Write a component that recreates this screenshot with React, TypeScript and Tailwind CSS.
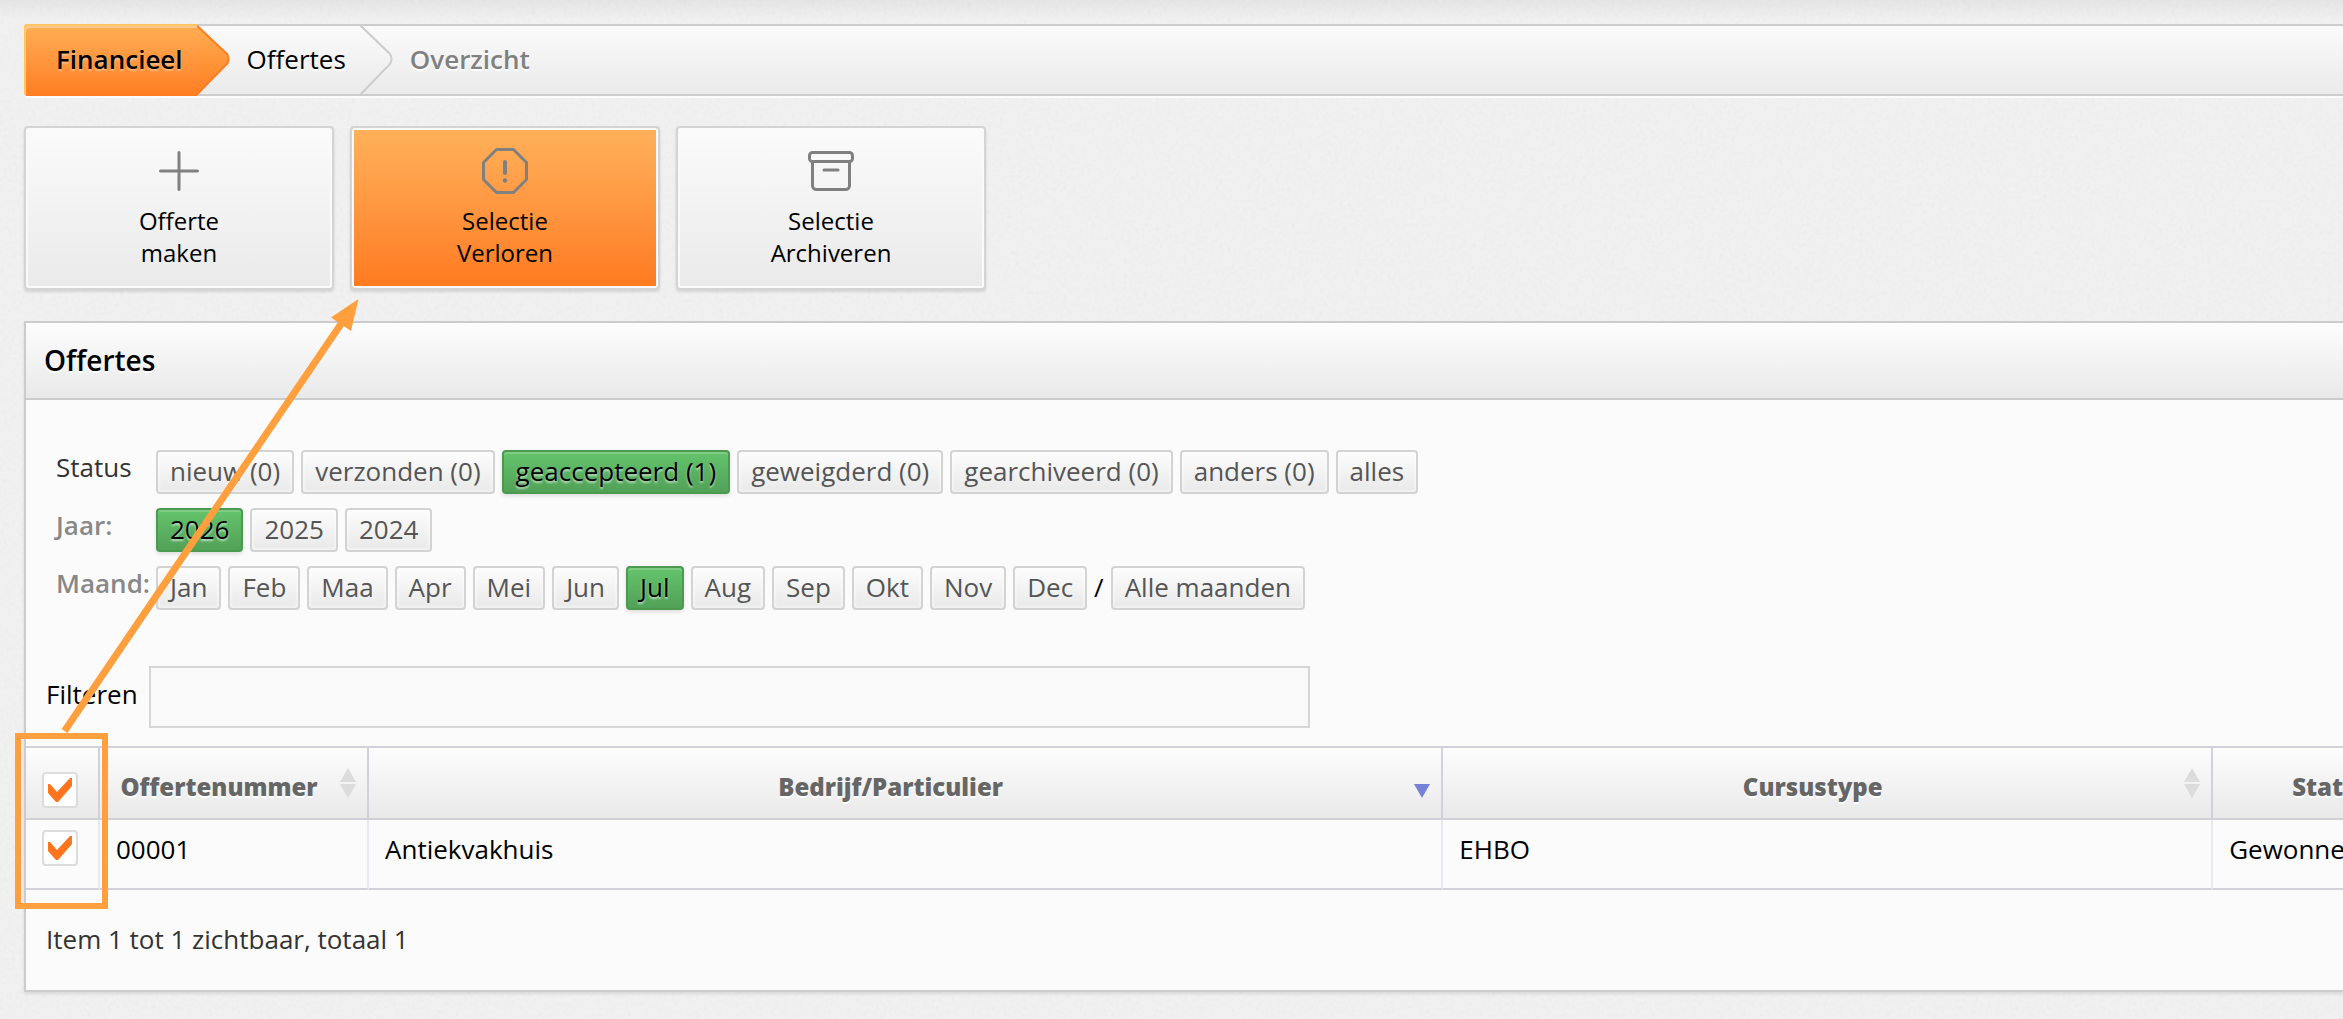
import { ReactNode, useState } from 'react';
import clsx from 'clsx';

const statuses = [
  'nieuw (0)',
  'verzonden (0)',
  'geaccepteerd (1)',
  'geweigderd (0)',
  'gearchiveerd (0)',
  'anders (0)',
  'alles',
];
const years = ['2026', '2025', '2024'];
const months = ['Jan', 'Feb', 'Maa', 'Apr', 'Mei', 'Jun', 'Jul', 'Aug', 'Sep', 'Okt', 'Nov', 'Dec'];

const PlusIcon = () => (
  <svg className="size-12" viewBox="0 0 48 48" fill="none" stroke="#808080" strokeWidth="3" strokeLinecap="round" aria-hidden="true">
    <path d="M24 5.5v37M5.5 24h37" />
  </svg>
);

const WarningIcon = () => (
  <svg className="size-12" viewBox="0 0 48 48" fill="none" stroke="#808080" strokeWidth="3" strokeLinejoin="round" aria-hidden="true">
    <path d="M15.5 2.5h17l13 13v17l-13 13h-17l-13-13v-17z" />
    <path d="M24 15v11" strokeWidth="4" strokeLinecap="round" />
    <circle cx="24" cy="33.5" r="2.3" fill="#808080" stroke="none" />
  </svg>
);

const ArchiveIcon = () => (
  <svg className="size-12" viewBox="0 0 48 48" fill="none" stroke="#808080" strokeWidth="3" strokeLinecap="round" strokeLinejoin="round" aria-hidden="true">
    <rect x="2.5" y="5.5" width="43" height="9" rx="3" />
    <path d="M5.500 14.500v24a4 4 0 0 0 4 4h29a4 4 0 0 0 4-4v-24M17 23h14" />
  </svg>
);

const SortIcon = ({ active = false }: { active?: boolean }) => (
  <svg className="h-[30px] w-4 shrink-0" viewBox="0 0 16 30" aria-hidden="true">
    {!active && <path d="M8 0l8 14H0z" fill="#dcdcdc" />}
    <path d="M0 16h16L8 30z" fill={active ? '#7580d8' : '#dcdcdc'} />
  </svg>
);

const Breadcrumb = () => (
  <nav
    aria-label="Kruimelpad"
    className="flex h-18 items-center rounded-sm bg-linear-to-b from-[#fbfbfb] to-[#eaeaea] text-[26px] leading-9 shadow-[inset_0_0_0_2px_#cccccc,0_2px_0_#fbfbfb]">
    <a
      href="/"
      className="flex h-full items-center rounded-l-sm bg-linear-to-b from-[#ffaf55] to-[#ff7d20] pr-[14px] pb-0.5 pl-8 font-semibold text-black shadow-[inset_1px_2px_0_#ffc562,inset_2px_4px_0_#ffc98d] text-shadow-[0_2px_2px_rgba(255,255,255,0.4)]">
      Financieel
    </a>
    <svg className="h-full w-[34px]" viewBox="0 0 34 72" aria-hidden="true">
      <defs>
        <linearGradient id="crumb" x1="0" y1="0" x2="0" y2="1">
          <stop offset="0" stopColor="#ffaf55" />
          <stop offset="1" stopColor="#ff7d20" />
        </linearGradient>
      </defs>
      <path d="M0 0L30 30q3 5 0 10L0 72z" fill="url(#crumb)" />
      <path d="M0 2L30 30q3 5 0 10L0 70" fill="none" stroke="#ff7d20" strokeWidth="2" />
    </svg>
    <a href="/" className="pr-[14px] pb-0.5 pl-4 text-black text-shadow-[0_2px_0_#ffffff]">
      Offertes
    </a>
    <svg className="h-full w-[34px]" viewBox="0 0 34 72" fill="none" aria-hidden="true">
      <path d="M0 1L30 30q3 5 0 10L0 71" stroke="#cccccc" strokeWidth="2" />
    </svg>
    <span className="pb-0.5 pl-4 font-semibold text-[#808080] text-shadow-[0_2px_0_#ffffff]">Overzicht</span>
  </nav>
);

type ActionProps = { icon: ReactNode; top: string; bottom: string; active?: boolean };

const ActionButton = ({ icon, top, bottom, active = false }: ActionProps) => (
  <button
    type="button"
    className={clsx(
      'flex w-[310px] flex-col items-center rounded-sm border-2 border-[#d4d4d4] bg-linear-to-b pt-[19px] pb-[19px] text-2xl leading-8 text-black shadow-[inset_0_0_0_2px_#fafafa,0_2px_3px_rgba(0,0,0,0.12)]',
      active ? 'from-[#ffb15a] to-[#ff7a1e]' : 'from-[#fbfbfb] to-[#eaeaea]',
    )}>
    {icon}
    <span className="mt-[10px]">{top}</span>
    <span>{bottom}</span>
  </button>
);

type ChipProps = { label: string; active: boolean; onClick: () => void };

const Chip = ({ label, active, onClick }: ChipProps) => (
  <button
    type="button"
    aria-pressed={active}
    onClick={onClick}
    className={clsx(
      'h-11 rounded-sm border-2 bg-linear-to-b px-3 pb-0.5 leading-[38px]',
      active
        ? 'border-[#4b9a50] from-[#64c46c] to-[#52a158] text-black shadow-[inset_0_2px_0_#7fcd85,0_2px_4px_rgba(0,0,0,0.12)] text-shadow-[0_2px_2px_rgba(255,255,255,0.6)]'
        : 'border-[#d3d3d3] from-[#fdfdfd] to-[#e9e9e9] text-[#555555] shadow-[inset_0_0_2px_2px_rgba(255,255,255,0.4)]',
    )}>
    {label}
  </button>
);

const FilterRow = ({ label, muted = false, children }: { label: string; muted?: boolean; children: ReactNode }) => (
  <div className="flex" role="group" aria-label={label}>
    <span className={clsx('w-[100px] shrink-0 leading-[34px]', muted ? 'font-semibold text-[#888888]' : 'text-[#333333]')}>
      {label}
    </span>
    <div className="flex gap-[7px]">{children}</div>
  </div>
);

type CheckboxProps = { label: string; checked: boolean; onChange: (checked: boolean) => void };

const Checkbox = ({ label, checked, onChange }: CheckboxProps) => (
  <label className="ml-4 grid size-9 place-items-center">
    <input
      type="checkbox"
      aria-label={label}
      checked={checked}
      onChange={(e) => onChange(e.target.checked)}
      className="peer col-start-1 row-start-1 size-9 appearance-none rounded-sm border-2 border-[#dcdcdc] bg-white"
    />
    <svg className="pointer-events-none invisible col-start-1 row-start-1 size-6 peer-checked:visible" viewBox="0 0 24 24" aria-hidden="true">
      <path d="M0 6l2 0 7 8L22 0h2v8L10 24H8L0 15z" fill="#ff741c" />
    </svg>
  </label>
);

const headCell =
  'h-[74px] border-y-2 border-r-2 border-[#d1d1d9] bg-linear-to-b from-[#fdfdfd] to-[#e9e9e9] p-0 text-2xl font-extrabold text-[#666666] text-shadow-[0_2px_0_#ffffff]';
const bodyCell = 'h-[70px] border-r-2 border-b-2 border-r-[#e8e8ee] border-b-[#d1d1d9] px-4 pt-1 align-top leading-[50px]';

const HeadLabel = ({ children, active }: { children: ReactNode; active?: boolean }) => (
  <div className="flex items-center pt-0.5 pr-[11px] pb-0.5">
    <span className="flex-1 pt-2 pr-0.5 text-center">{children}</span>
    <SortIcon active={active} />
  </div>
);

const OfferTable = () => {
  const [selected, setSelected] = useState(true);

  return (
    <table className="w-full table-fixed border-separate border-spacing-0 text-black">
      <colgroup>
        <col className="w-[74px]" />
        <col className="w-[269px]" />
        <col className="w-[43.75%]" />
        <col className="w-[31.35%]" />
        <col />
      </colgroup>
      <thead>
        <tr>
          <th className={clsx(headCell, 'pt-3.5')}>
            <Checkbox label="Alles selecteren" checked={selected} onChange={setSelected} />
          </th>
          <th className={headCell}>
            <HeadLabel>Offertenummer</HeadLabel>
          </th>
          <th className={headCell}>
            <HeadLabel active>Bedrijf/Particulier</HeadLabel>
          </th>
          <th className={headCell}>
            <HeadLabel>Cursustype</HeadLabel>
          </th>
          <th className={headCell}>
            <HeadLabel>Status</HeadLabel>
          </th>
        </tr>
      </thead>
      <tbody>
        <tr>
          <td className="border-r-2 border-b-2 border-r-[#e8e8ee] border-b-[#d1d1d9] p-0 pt-2.5 align-top">
            <Checkbox label="Offerte 00001" checked={selected} onChange={setSelected} />
          </td>
          <td className={bodyCell}>00001</td>
          <td className={bodyCell}>Antiekvakhuis</td>
          <td className={bodyCell}>EHBO</td>
          <td className={bodyCell}>Gewonnen</td>
        </tr>
      </tbody>
    </table>
  );
};

const OffersPanel = () => {
  const [status, setStatus] = useState('geaccepteerd (1)');
  const [year, setYear] = useState('2026');
  const [month, setMonth] = useState('Jul');

  return (
    <section className="mt-[31px] border-2 border-[#cccccc] bg-[#fbfbfb] text-[26px] shadow-[0_2px_3px_rgba(0,0,0,0.1)]">
      <h2 className="flex h-[77px] items-center border-b-2 border-[#cccccc] bg-linear-to-b from-[#fdfdfd] to-[#e9e9e9] pb-0.5 pl-[18px] text-[28px] font-semibold text-black text-shadow-[0_2px_0_#ffffff]">
        Offertes
      </h2>
      <div className="flex flex-col gap-[14px] pt-[50px] pl-[30px]">
        <FilterRow label="Status">
          {statuses.map((s) => (
            <Chip key={s} label={s} active={s === status} onClick={() => setStatus(s)} />
          ))}
        </FilterRow>
        <FilterRow label="Jaar:" muted>
          {years.map((y) => (
            <Chip key={y} label={y} active={y === year} onClick={() => setYear(y)} />
          ))}
        </FilterRow>
        <FilterRow label="Maand:" muted>
          {months.map((m) => (
            <Chip key={m} label={m} active={m === month} onClick={() => setMonth(m)} />
          ))}
          <span className="leading-[42px] text-black">/</span>
          <Chip label="Alle maanden" active={month === ''} onClick={() => setMonth('')} />
        </FilterRow>
      </div>
      <div className="mt-14 mb-[18px] flex items-center gap-[11px] pl-5">
        <label htmlFor="filter" className="pb-1.5 text-black">
          Filteren
        </label>
        <input id="filter" type="text" className="h-[62px] w-[47.7%] border-2 border-[#d6d6d6] bg-[#f9f9f9] px-3 outline-none" />
      </div>
      <OfferTable />
      <p className="px-5 pt-[29px] pb-[31px] leading-10 text-[#333333]">Item 1 tot 1 zichtbaar, totaal 1</p>
    </section>
  );
};

// Fine paper grain behind the whole page
const Grain = () => (
  <svg className="absolute inset-0 -z-10 h-full w-full opacity-8" aria-hidden="true">
    <filter id="grain">
      <feTurbulence type="fractalNoise" baseFrequency="0.25" numOctaves="2" stitchTiles="stitch" />
      <feColorMatrix type="saturate" values="0" />
    </filter>
    <rect width="100%" height="100%" filter="url(#grain)" />
  </svg>
);

// Points from the ticked rows to the action above
const Annotation = () => (
  <svg className="pointer-events-none absolute top-0 left-0 h-[920px] w-[400px]" viewBox="0 0 400 920" aria-hidden="true">
    <rect x="18" y="736" width="87" height="170" fill="none" stroke="#ff9f3d" strokeWidth="6" />
    <path d="M64.500 731L343 321" stroke="#ff9f3d" strokeWidth="7" />
    <path d="M358.500 299L331 317.500 351 331z" fill="#ff9f3d" />
  </svg>
);

export default function App() {
  return (
    <div className="relative isolate min-h-screen overflow-hidden bg-[#f2f2f2] font-['Open_Sans','Noto_Sans',sans-serif]">
      <Grain />
      <div className="absolute inset-x-0 top-0 -z-10 h-5 bg-linear-to-b from-black/5 to-transparent" />
      <main className="w-[106%] pt-6 pb-6 pl-6">
        <Breadcrumb />
        <div className="mt-[30px] flex gap-4">
          <ActionButton icon={<PlusIcon />} top="Offerte" bottom="maken" />
          <ActionButton icon={<WarningIcon />} top="Selectie" bottom="Verloren" active />
          <ActionButton icon={<ArchiveIcon />} top="Selectie" bottom="Archiveren" />
        </div>
        <OffersPanel />
      </main>
      <Annotation />
    </div>
  );
}
